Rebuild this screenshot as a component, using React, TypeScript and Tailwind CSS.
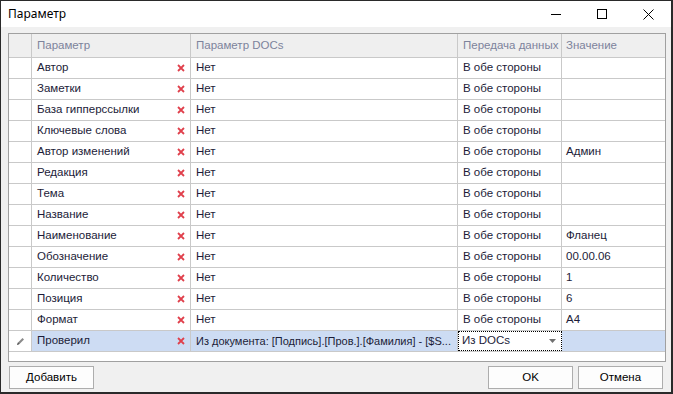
import React from 'react'

type Row = { name: string; docs: string; transfer: string; value: string }

const ROWS: Row[] = [
  { name: 'Автор', docs: 'Нет', transfer: 'В обе стороны', value: '' },
  { name: 'Заметки', docs: 'Нет', transfer: 'В обе стороны', value: '' },
  { name: 'База гипперссылки', docs: 'Нет', transfer: 'В обе стороны', value: '' },
  { name: 'Ключевые слова', docs: 'Нет', transfer: 'В обе стороны', value: '' },
  { name: 'Автор изменений', docs: 'Нет', transfer: 'В обе стороны', value: 'Админ' },
  { name: 'Редакция', docs: 'Нет', transfer: 'В обе стороны', value: '' },
  { name: 'Тема', docs: 'Нет', transfer: 'В обе стороны', value: '' },
  { name: 'Название', docs: 'Нет', transfer: 'В обе стороны', value: '' },
  { name: 'Наименование', docs: 'Нет', transfer: 'В обе стороны', value: 'Фланец' },
  { name: 'Обозначение', docs: 'Нет', transfer: 'В обе стороны', value: '00.00.06' },
  { name: 'Количество', docs: 'Нет', transfer: 'В обе стороны', value: '1' },
  { name: 'Позиция', docs: 'Нет', transfer: 'В обе стороны', value: '6' },
  { name: 'Формат', docs: 'Нет', transfer: 'В обе стороны', value: 'А4' },
]

const cell = 'h-full flex items-center border-r border-[#c9c9c9] px-[5px] whitespace-nowrap overflow-hidden'

function RedX() {
  return (
    <svg width="8" height="8" viewBox="0 0 8 8" className="shrink-0">
      <path d="M1 1 L7 7 M7 1 L1 7" stroke="#e0404c" strokeWidth="1.8" />
    </svg>
  )
}

function Pencil() {
  return (
    <svg width="9" height="9" viewBox="0 0 9 9">
      <path d="M1 8 L2 5.5 L6.5 1 L8 2.5 L3.5 7 Z" fill="#8a8a8a" />
      <path d="M1 8 L2 5.5 L3.5 7 Z" fill="#555" />
    </svg>
  )
}

function WinBtn({ children }: { children: React.ReactNode }) {
  return <div className="w-[46px] h-[27px] flex items-center justify-center">{children}</div>
}

export default function App() {
  return (
    <div
      className="w-[673px] h-[394px] bg-[#f0f0f0] border border-[#2a2a2a] border-r-2 border-b-2 flex flex-col text-[11.5px] text-[#1c1c38]"
      style={{ fontFamily: '"Liberation Sans", Arial, sans-serif' }}
    >
      {/* title bar */}
      <div className="h-[26px] bg-white flex items-center shrink-0">
        <div
          className="flex-1 pl-[7px] text-[12px] text-black"
          style={{ fontFamily: '"Noto Sans", "Open Sans", sans-serif' }}
        >
          Параметр
        </div>
        <WinBtn>
          <div className="w-[10px] h-px bg-black" />
        </WinBtn>
        <WinBtn>
          <div className="w-[10px] h-[10px] border border-black" />
        </WinBtn>
        <WinBtn>
          <svg width="11" height="11" viewBox="0 0 11 11">
            <path d="M0.5 0.5 L10.5 10.5 M10.5 0.5 L0.5 10.5" stroke="#000" strokeWidth="1" />
          </svg>
        </WinBtn>
      </div>

      {/* grid */}
      <div className="mt-[6px] ml-[7px] w-[658px] h-[329px] bg-white border border-[#a0a0a0] flex flex-col">
        <div className="h-[24px] flex bg-[#efefef] border-b border-[#c9c9c9] text-[#7d839c] shrink-0">
          <div className="w-[23px] h-full border-r border-[#c9c9c9]" />
          <div className={`${cell} w-[159px]`}>Параметр</div>
          <div className={`${cell} w-[267px] px-[4px]`}>Параметр DOCs</div>
          <div className={`${cell} w-[104px] px-[4px]`}>Передача данных</div>
          <div className="h-full flex items-center px-[4px] flex-1">Значение</div>
        </div>
        {ROWS.map(r => (
          <div key={r.name} className="h-[21px] flex border-b border-[#c9c9c9] shrink-0">
            <div className="w-[23px] h-full border-r border-[#c9c9c9]" />
            <div className={`${cell} w-[159px] justify-between pr-[5px]`}>
              <span>{r.name}</span>
              <RedX />
            </div>
            <div className={`${cell} w-[267px] px-[4px]`}>{r.docs}</div>
            <div className={`${cell} w-[104px] px-[4px]`}>{r.transfer}</div>
            <div className="h-full flex items-center px-[4px] flex-1">{r.value}</div>
          </div>
        ))}
        <div className="h-[21px] flex border-b border-[#c9c9c9] shrink-0">
          <div className="w-[23px] h-full border-r border-[#c9c9c9] flex items-center justify-center">
            <Pencil />
          </div>
          <div className="flex flex-1 h-full bg-[#cddcf3]">
            <div className={`${cell} w-[159px] justify-between pr-[5px]`}>
              <span>Проверил</span>
              <RedX />
            </div>
            <div className={`${cell} w-[267px] px-[4px]`}>
              <span className="text-[11px]">Из документа: [Подпись].[Пров.].[Фамилия] - [$S...</span>
            </div>
            <div className="w-[104px] h-full bg-white border border-dotted border-black flex items-center justify-between px-[3px]">
              <span>Из DOCs</span>
              <svg width="7" height="4" viewBox="0 0 7 4" className="mr-[2px]">
                <path d="M0 0 L7 0 L3.5 4 Z" fill="#707070" />
              </svg>
            </div>
            <div className="flex-1" />
          </div>
        </div>
      </div>

      {/* buttons */}
      <div className="flex items-center mt-[4px] px-[8px]">
        <button className="w-[85px] h-[23px] bg-[#fdfdfd] border border-[#adadad] text-black">Добавить</button>
        <div className="flex-1" />
        <button className="w-[85px] h-[23px] bg-[#fdfdfd] border border-[#adadad] text-black mr-[5px]">OK</button>
        <button className="w-[85px] h-[23px] bg-[#fdfdfd] border border-[#adadad] text-black">Отмена</button>
      </div>
    </div>
  )
}
